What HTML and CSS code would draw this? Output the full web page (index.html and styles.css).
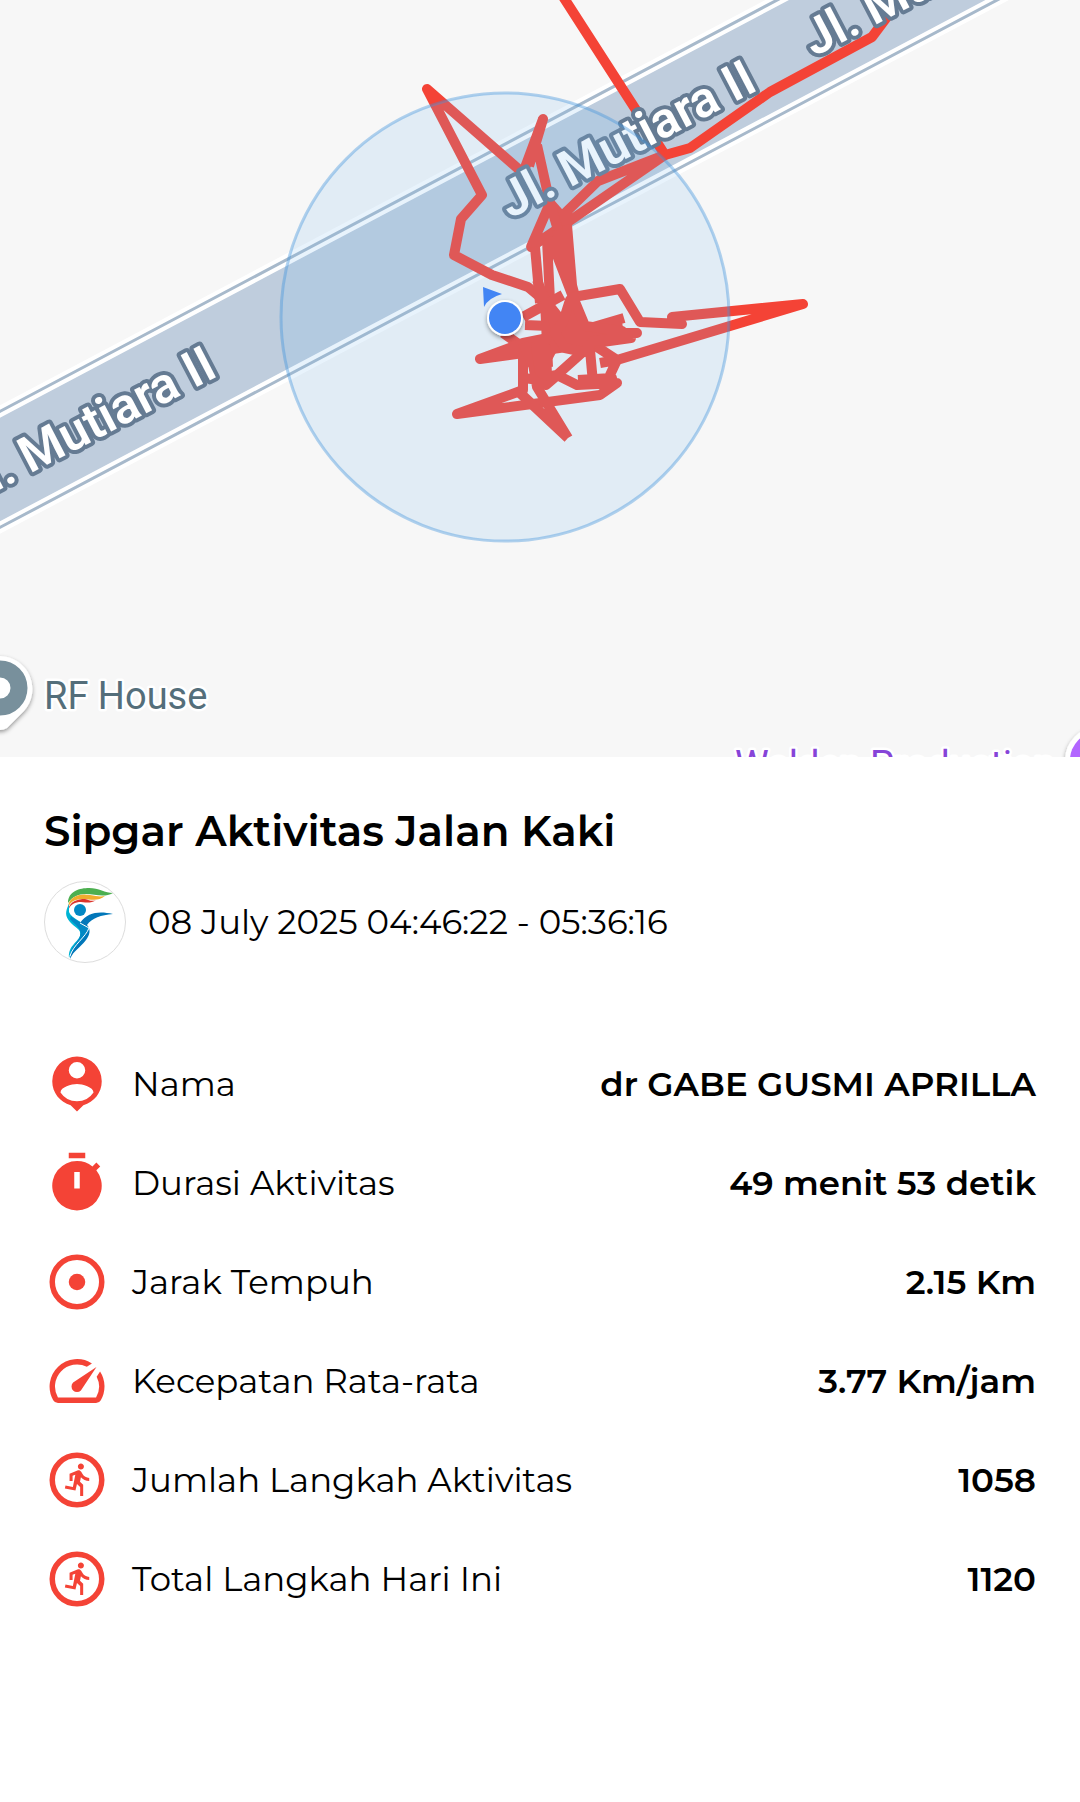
FILE: index.html
```html
<!DOCTYPE html>
<html lang="id">
<head>
<meta charset="utf-8">
<meta name="viewport" content="width=device-width, initial-scale=1">
<title>Sipgar Aktivitas Jalan Kaki</title>
<link rel="stylesheet" href="styles.css">
</head>
<body>
<svg class="map" viewBox="0 0 1080 757" role="img" aria-label="Peta rute jalan kaki">
  <defs>
    <filter id="shadow" x="-30%" y="-30%" width="160%" height="160%"><feDropShadow dx="0" dy="2" stdDeviation="2" flood-opacity=".4"/></filter>
  </defs>
  <!-- road -->
  <path class="road" d="M-20 422 L798 -11 L1018 -11 L-20 538Z"/>
  <path class="road-edge" d="M-20 422 L798 -11 M-20 538 L1018 -11"/>
  <path class="road-line" d="M-20 422 L798 -11 M-20 538 L1018 -11"/>
  <!-- walked route -->
  <g class="route">
    <path d="M562 -5 L618 82 L665 155 L690 148 L770 92 L872 37 L890 13 L900 -8"/>
    <path d="M665 155 L598 181 L560 218 M665 155 L568 222 L531 247 L550 203 L565 220"/>
    <path d="M547 303 L528 287 L492 275 L454 255 L461 219 L482 195 L427 89 L523 173 L543 119 L529 166 M537 145 L547 190 L550 203 L558 230"/>
    <path d="M535 247 L540 303 M547 240 L550 300 M550 237 L573 297 M557 230 L576 300 M567 225 L573 297 L583 327"/>
    <path d="M573 297 L620 289 L640 322 L682 324 L672 317 L803 304 L617 360 L594 345"/>
    <path d="M523 317 L563 295 M525 325 L573 327 M503 333 L523 347 L548 365 M537 280 L545 300 L548 367"/>
    <path d="M624 318 L573 333 L637 333 L575 335 L631 338 L480 359 L523 343 L553 337 M592 328 L622 322"/>
    <path d="M523 343 L523 390 L457 414 L600 395 L617 383 L577 385 L557 375 L533 379 M557 375 L585 350 L590 350 L593 383 M617 360 L610 375 L617 388 M600 363 L617 360 M578 380 L612 378 L602 391"/>
    <path d="M568 438 L537 387 L530 347 L540 380 L523 378 M568 438 L520 393 M523 343 L535 370 L546 385 L560 373 M545 300 L565 325 L548 357 M563 350 L550 310"/>
    <path d="M570 300 L573 297 L585 326 L622 331 L628 337 L593 341 L584 352 L565 348 L555 333 L563 322Z" fill="#f44336"/>
    <path d="M536 348 L546 348 L547 376 L540 372Z" fill="#f44336"/>
  </g>
  <!-- street names -->
  <g class="street">
    <text transform="translate(510 219) rotate(-27.5)">Jl. Mutiara II</text>
    <text transform="translate(-30 505) rotate(-27.5)">Jl. Mutiara II</text>
    <text transform="translate(814 57) rotate(-27.5)">Jl. Mutiara II</text>
  </g>
  <!-- location accuracy and heading -->
  <circle class="accuracy" cx="505" cy="317" r="224"/>
  <path d="M483 287 L502 294 Q488 298 484 307Z" fill="#4285f4"/>
  <circle cx="505" cy="318" r="18" fill="#fff" filter="url(#shadow)"/>
  <circle cx="505" cy="318" r="16" fill="#4285f4"/>
  <!-- places -->
  <path d="M0 656 A33 33 0 0 1 24 711 L7 728 Q0 732 -7 728 L-24 711 A33 33 0 0 1 0 656Z" fill="#fff" filter="url(#shadow)"/>
  <circle cx="0" cy="688" r="19" fill="none" stroke="#78909c" stroke-width="17"/>
  <text class="place" x="44" y="709">RF House</text>
  <circle cx="1098" cy="760" r="33" fill="#fff" filter="url(#shadow)"/>
  <circle cx="1098" cy="760" r="28" fill="#b266ff"/>
  <text class="place place-purple" x="735" y="778">Walden Production</text>
</svg>
<main class="activity">
  <h1 class="title">Sipgar Aktivitas Jalan Kaki</h1>
  <div class="session">
    <svg class="logo" viewBox="0 0 82 82" aria-hidden="true">
      <circle cx="41" cy="41" r="40.500" fill="#fff" stroke="#ddd"/>
      <path d="M24 22 C24 10 36 7 45 7 C55 7 61 12 69 12 C60 17 51 13 42 13 C34 13 28 16 24 22Z" fill="#4caf50"/>
      <path d="M24 26 C25 15 36 12 46 14 C52 15 56 16 61 15 C54 21 46 18 39 18 C32 18 27 20 24 26Z" fill="#f0ad2e"/>
      <path d="M24 30 C25 20 34 18 41 18 C45 19 48 21 52 19 C47 23 40 21 35 21 C29 22 26 24 24 30Z" fill="#dc352b"/>
      <circle cx="36" cy="29" r="6" fill="#0288c4"/>
      <path d="M25 23 C21 31 21 35 26 41 C31 47 38 48 36 55 C33 62 24 65 25 77 C29 65 43 58 44 47 C38 40 28 38 25 31Z" fill="#00b4d4"/>
      <path d="M36 42 C44 31 55 30 69 33 C57 34 48 37 43 44 C47 48 46 54 42 59 C36 67 30 69 26 78 C27 64 42 58 44 47Z" fill="#0277b9"/>
      <path d="M26 38 C32 45 38 47 36 55 C34 62 26 66 26 76 C29 65 43 58 44 47 C40 42 32 40 27 35Z" fill="#0288c4"/>
      <path d="M36 42 L45 47 C42 56 29 64 26 75" fill="none" stroke="#fff" stroke-width="1"/>
    </svg>
    <p class="time">08 July 2025 04:46:22 - 05:36:16</p>
  </div>
  <dl class="stats">
    <div class="row">
      <dt><svg class="icon" viewBox="0 0 24 24" aria-hidden="true"><path d="M12 2a9 9 0 0 0-9 9c0 4.170 2.840 7.670 6.690 8.690L12 22l2.310-2.310C18.160 18.670 21 15.170 21 11a9 9 0 0 0-9-9zm0 2a3 3 0 1 1 0 6 3 3 0 0 1 0-6zm0 14.300a7.200 7.200 0 0 1-6-3.220c.030-1.990 4-3.080 6-3.080s5.970 1.090 6 3.080a7.200 7.200 0 0 1-6 3.220z"/></svg>Nama</dt>
      <dd>dr GABE GUSMI APRILLA</dd>
    </div>
    <div class="row">
      <dt><svg class="icon" viewBox="0 0 24 24" aria-hidden="true"><path fill-rule="evenodd" d="M15 1H9v2h6V1zm-4 13h2V8h-2v6zm8.030-6.610l1.420-1.420-1.410-1.410-1.420 1.420A8.960 8.960 0 0 0 12 4a9 9 0 1 0 7.030 3.390z"/></svg>Durasi Aktivitas</dt>
      <dd>49 menit 53 detik</dd>
    </div>
    <div class="row">
      <dt><svg class="icon" viewBox="0 0 24 24" aria-hidden="true"><circle class="ring" cx="12" cy="12" r="9"/><circle cx="12" cy="12" r="3"/></svg>Jarak Tempuh</dt>
      <dd>2.15 Km</dd>
    </div>
    <div class="row">
      <dt><svg class="icon" viewBox="0 0 24 24" aria-hidden="true"><path d="M20.380 8.570l-1.230 1.850a8 8 0 0 1-.22 7.580H5.070A8 8 0 0 1 15.580 6.850l1.850-1.230A10 10 0 0 0 3.350 19a2 2 0 0 0 1.720 1h13.850a2 2 0 0 0 1.740-1 10 10 0 0 0-.27-10.440zM10.590 15.410a2 2 0 0 0 2.830 0l5.660-8.490-8.490 5.660a2 2 0 0 0 0 2.830z"/></svg>Kecepatan Rata-rata</dt>
      <dd>3.77 Km/jam</dd>
    </div>
    <div class="row">
      <dt><svg class="icon" viewBox="0 0 24 24" aria-hidden="true"><circle class="ring" cx="12" cy="12" r="9"/><path transform="translate(6 5.200) scale(.55)" d="M13.490 5.480c1.100 0 2-.9 2-2s-.9-2-2-2-2 .9-2 2 .9 2 2 2zm-3.600 13.900l1-4.400 2.100 2v6h2v-7.500l-2.100-2 .6-3c1.300 1.500 3.300 2.500 5.500 2.500v-2c-1.900 0-3.500-1-4.300-2.400l-1-1.600c-.4-.6-1-1-1.700-1-.3 0-.5.1-.8.1l-5.200 2.200v4.700h2v-3.400l1.800-.7-1.600 8.100-4.900-1-.4 2 7 1.400z"/></svg>Jumlah Langkah Aktivitas</dt>
      <dd>1058</dd>
    </div>
    <div class="row">
      <dt><svg class="icon" viewBox="0 0 24 24" aria-hidden="true"><circle class="ring" cx="12" cy="12" r="9"/><path transform="translate(6 5.200) scale(.55)" d="M13.490 5.480c1.100 0 2-.9 2-2s-.9-2-2-2-2 .9-2 2 .9 2 2 2zm-3.600 13.900l1-4.400 2.100 2v6h2v-7.500l-2.100-2 .6-3c1.300 1.500 3.300 2.500 5.500 2.500v-2c-1.900 0-3.500-1-4.300-2.400l-1-1.600c-.4-.6-1-1-1.700-1-.3 0-.5.1-.8.1l-5.200 2.200v4.700h2v-3.400l1.800-.7-1.600 8.100-4.900-1-.4 2 7 1.400z"/></svg>Total Langkah Hari Ini</dt>
      <dd>1120</dd>
    </div>
  </dl>
</main>
</body>
</html>
```
FILE: styles.css
```css
* { box-sizing: border-box; }

body {
  margin: 0;
  background: #fff;
  color: #000;
  font-family: Montserrat, Inter, sans-serif;
}

.map {
  display: block;
  width: 100%;
  height: auto;
  background: #f7f7f7;
}

.road { fill: #bfcddd; }
.road-edge { fill: none; stroke: #fff; stroke-width: 11px; }
.road-line { fill: none; stroke: #a7b9cb; stroke-width: 3px; }

.route {
  fill: none;
  stroke: #f44336;
  stroke-width: 10px;
  stroke-linejoin: round;
}

.street {
  font: 600 50px Roboto, sans-serif;
  fill: #fff;
  stroke: #657b93;
  stroke-width: 8px;
  stroke-linejoin: round;
  paint-order: stroke;
}

.accuracy {
  fill: rgb(130 190 236 / .18);
  stroke: rgb(66 148 220 / .4);
  stroke-width: 3px;
}

.place {
  font: 400 38px Roboto, sans-serif;
  fill: #546e7a;
  stroke: #fff;
  stroke-width: 5px;
  stroke-linejoin: round;
  paint-order: stroke;
}
.place-purple { fill: #8644d8; }

.activity { padding: 44px; }

.title {
  margin: 0;
  font-size: 42px;
  font-weight: 600;
  line-height: 60px;
}

.session {
  display: flex;
  align-items: center;
  gap: 22px;
  margin-top: 20px;
}
.logo { width: 82px; height: 82px; flex: none; }
.time { margin: 0; font-size: 34px; line-height: 44px; }

.stats { margin: 88px 0 0; display: grid; gap: 33px; }
.row {
  display: flex;
  align-items: center;
  justify-content: space-between;
  gap: 22px;
}
.row dt {
  display: flex;
  align-items: center;
  gap: 22px;
  font-size: 34px;
  line-height: 44px;
}
.row dd {
  margin: 0;
  font-size: 34px;
  font-weight: 600;
  line-height: 44px;
  text-align: right;
}
.icon { width: 66px; height: 66px; flex: none; fill: #f44336; }
.ring { fill: none; stroke: #f44336; stroke-width: 2px; }
```
